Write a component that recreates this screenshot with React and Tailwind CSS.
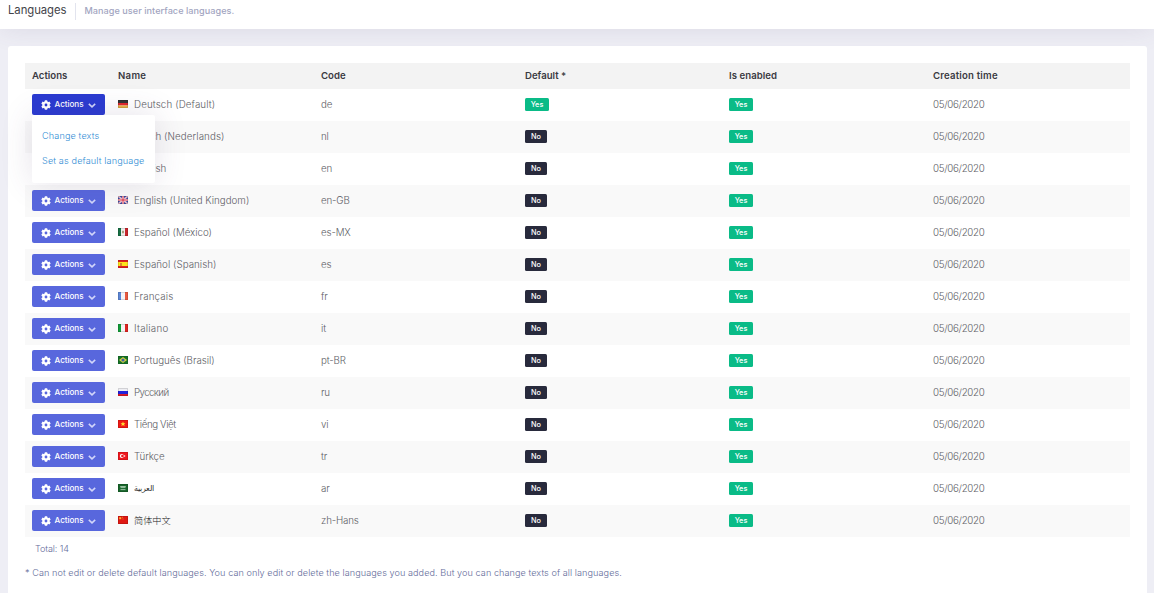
import React from "react";

const FLAGS = {
  de: <><path fill="#333" d="M0 0h10v3H0z" /><path fill="#e0262b" d="M0 3h10v2.5H0z" /><path fill="#e9b445" d="M0 5.5h10V8H0z" /></>,
  nl: <><path fill="#b22" d="M0 0h10v3H0z" /><path fill="#fff" d="M0 3h10v2H0z" /><path fill="#248" d="M0 5h10v3H0z" /></>,
  us: <><path fill="#fff" d="M0 0h10v8H0z" /><path stroke="#c33" d="M0 .5h10M0 2.5h10M0 4.5h10M0 6.5h10" /><path fill="#348" d="M0 0h5v4H0z" /></>,
  gb: <><path fill="#3f4fa8" d="M0 0h10v8H0z" /><path stroke="#f4e4ec" strokeWidth="1.5" d="M0 0l10 8M10 0L0 8" /><path stroke="#f4e4ec" strokeWidth="2" d="M5 0v8M0 4h10" /><path stroke="#e0384c" strokeWidth="1" d="M5 0v8M0 4h10" /><path stroke="#d94a5c" strokeWidth=".4" d="M0 0l10 8M10 0L0 8" /></>,
  mx: <><path fill="#177044" d="M0 0h3v8H0z" /><path fill="#eee" d="M3 0h4v8H3z" /><path fill="#c8262e" d="M7 0h3v8H7z" /><path fill="#9b8c66" d="M4.2 2.8h1.6v2.4H4.2z" /></>,
  es: <><path fill="#e3201c" d="M0 0h10v8H0z" /><path fill="#fde21b" d="M0 2h10v4H0z" /><path fill="#d98b2b" d="M2 3h2v3H2z" /></>,
  fr: <><path fill="#5d87d6" d="M0 0h3v8H0z" /><path fill="#f3f3f6" d="M3 0h4v8H3z" /><path fill="#e9593f" d="M7 0h3v8H7z" /></>,
  it: <><path fill="#119b38" d="M0 0h3v8H0z" /><path fill="#f4f4f4" d="M3 0h4v8H3z" /><path fill="#df2421" d="M7 0h3v8H7z" /></>,
  br: <><path fill="#167329" d="M0 0h10v8H0z" /><path fill="#d9d33e" d="M5 1l4 3-4 3-4-3z" /><circle cx="5" cy="4" r="1.6" fill="#3d61a4" /></>,
  ru: <><path fill="#eeeef3" d="M0 0h10v3H0z" /><path fill="#2222dc" d="M0 3h10v3H0z" /><path fill="#d91b2a" d="M0 6h10v2H0z" /></>,
  vn: <><path fill="#f01914" d="M0 0h10v8H0z" /><path fill="#ffe334" d="M5 1.6l.7 1.6h1.7L6.1 4.4l.5 1.8L5 5.1 3.4 6.2l.5-1.8-1.3-1.2h1.7z" /></>,
  tr: <><path fill="#f0161d" d="M0 0h10v8H0z" /><circle cx="3.8" cy="4" r="2" fill="#fff" /><circle cx="4.4" cy="4" r="1.3" fill="#e8161d" /><circle cx="6.5" cy="4" r=".8" fill="#fff" /></>,
  sa: <><path fill="#17652b" d="M0 0h10v8H0z" /><path stroke="#a9cdb0" strokeWidth=".9" d="M2.2 2.5h5.6M2.5 3.6h5M2.5 5.6h5" /></>,
  cn: <><path fill="#e01913" d="M0 0h10v8H0z" /><path fill="#ffb52e" d="M1.2 1.2h2v2h-2z" /><path fill="#ef7a24" d="M4 .8h1v1H4zM4.5 2.5h1v1h-1z" /></>,
};

const ROWS = [
  ["de", "Deutsch (Default)", "de", "tracking-[0.12px]"],
  ["nl", "Dutch (Nederlands)", "nl", "tracking-[0.1px]"],
  ["us", "English", "en", "tracking-[-0.1px]"],
  ["gb", "English (United Kingdom)", "en-GB", "tracking-[0.01px]"],
  ["mx", "Español (México)", "es-MX", "tracking-[-0.02px]"],
  ["es", "Español (Spanish)", "es", "tracking-[0.04px]"],
  ["fr", "Français", "fr", "tracking-[0.14px]"],
  ["it", "Italiano", "it", "tracking-[0.25px]"],
  ["br", "Português (Brasil)", "pt-BR", "tracking-[0px]"],
  ["ru", "Русский", "ru", "tracking-[-0.6px]"],
  ["vn", "Tiếng Việt", "vi", "tracking-[-0.4px]"],
  ["tr", "Türkçe", "tr", "tracking-[-0.1px]"],
  ["sa", "العربية", "ar", "text-[#333] text-[7.8px]"],
  ["cn", "简体中文", "zh-Hans", "text-[#222] text-[9.2px]"],
];

const COLS = "grid grid-cols-[86px_203px_204px_204px_204px_204px]";

function Flag({ id }) {
  return (
    <svg viewBox="0 0 10 8" className="mb-[2px] h-2 w-2.5 shrink-0" fill="none">
      {FLAGS[id]}
      <path d="M.5.5h9v7h-9z" stroke="#000" strokeOpacity=".12" />
    </svg>
  );
}

function Gear({ open }) {
  return (
    <svg viewBox="0 0 10 10" className="size-[10px] shrink-0" fill="none">
      <path stroke="#fff" strokeWidth="2.4" d="M5 .3v9.4M.9 2.65l8.2 4.7M9.1 2.65L.9 7.35" />
      <circle cx="5" cy="5" r="2.7" stroke="#fff" strokeWidth="2" />
      <circle cx="5" cy="5" r="1.4" fill={open ? "#2b3bd1" : "#5867dd"} />
    </svg>
  );
}

function ActionButton({ open }) {
  return (
    <button className={`mb-px flex h-[21px] w-[73px] items-center rounded-[2px] pl-[9px] text-[8.1px] font-medium text-white ${open ? "bg-[#2b3bd1]" : "bg-[#5867dd]"}`}>
      <Gear open={open} />
      <span className="ml-[3.5px] w-[29px] whitespace-nowrap tracking-[-0.05px]">Actions</span>
      <svg viewBox="0 0 8 5" className="mt-px ml-[4.5px] h-[5px] w-2" fill="none">
        <path d="M.8.9L4 3.9 7.2.9" stroke="#d2d6fa" strokeWidth="1.5" />
      </svg>
    </button>
  );
}

function Badge({ yes }) {
  return (
    <span className={`mb-px flex h-[13px] items-center justify-center rounded-[1.5px] pt-px text-[7.3px] font-medium text-white ${yes ? "w-6 bg-[#0abb87]" : "w-[22px] bg-[#282a3c]"}`}>
      {yes ? "Yes" : "No"}
    </span>
  );
}

function Menu() {
  return (
    <div className="absolute top-[26px] left-[7px] z-10 flex h-[68px] w-[123px] flex-col rounded-[2px] bg-white pt-2 text-[9.1px] leading-[25px] text-[#2f8cd4] shadow-[0_0_32px_rgba(82,63,105,0.15)]">
      <a className="ml-[3px] whitespace-nowrap tracking-[0.14px]">Change texts</a>
      <a className="ml-[3px] whitespace-nowrap tracking-[0.14px]">Set as default language</a>
    </div>
  );
}

export default function App() {
  return (
    <div className="flex h-[593px] w-[1154px] flex-col overflow-hidden bg-[#eeeef5] font-['Inter','Noto_Sans','Noto_Sans_CJK_SC',sans-serif]">
      <header className="flex h-[29px] shrink-0 items-start bg-white pl-2 shadow-[0_0_26px_rgba(82,63,105,0.12)]">
        <h1 className="w-[68px] border-r border-[#e7e8ef] text-[11.3px] leading-[21px] text-[#434349] [border-image:linear-gradient(#fff_4px,#e2e4ee_4px,#e2e4ee_19px,#fff_19px)_1]">
          <span className="whitespace-nowrap tracking-[-0.05px]">Languages</span>
        </h1>
        <span className="ml-[8.5px] whitespace-nowrap text-[9.1px] font-medium leading-[22px] tracking-[0.05px] text-[#a2a5bf]">Manage user interface languages.</span>
      </header>
      <main className="mr-[7px] ml-2 mt-[17px] flex-1 rounded-t-[3px] bg-white px-[17px] pt-[17px]">
        <div className={`${COLS} h-[26px] items-center bg-[#f3f3f3] text-[9.6px] font-semibold text-[#3a3a42] *:pl-[7px]`}>
          <div>Actions</div>
          <div className="tracking-[0.3px]">Name</div>
          <div>Code</div>
          <div>Default *</div>
          <div className="tracking-[0.05px]">Is enabled</div>
          <div className="tracking-[0.2px]">Creation time</div>
        </div>
        {ROWS.map(([flag, name, code, nameStyle], i) => (
          <div key={code} className={`${COLS} relative h-8 items-center text-[9.75px] font-light text-[#606066] *:pl-[7px] ${i % 2 ? "bg-[#f9f9f9]" : "bg-white"}`}>
            <div><ActionButton open={i === 0} /></div>
            <div className="flex items-center">
              <Flag id={flag} />
              <span className={`ml-1.5 whitespace-nowrap ${nameStyle}`}>{name}</span>
            </div>
            <div className="tracking-[-0.15px]">{code}</div>
            <div><Badge yes={i === 0} /></div>
            <div><Badge yes /></div>
            <div className="tracking-[-0.3px]">05/06/2020</div>
            {i === 0 && <Menu />}
          </div>
        ))}
        <p className="pl-[10px] text-[9.1px] font-light leading-6 tracking-[-0.1px] text-[#646c9a]">Total: 14</p>
        <p className="whitespace-nowrap text-[9.1px] font-light leading-6 tracking-[0.07px] text-[#646c9a]">* Can not edit or delete default languages. You can only edit or delete the languages you added. But you can change texts of all languages.</p>
      </main>
    </div>
  );
}
